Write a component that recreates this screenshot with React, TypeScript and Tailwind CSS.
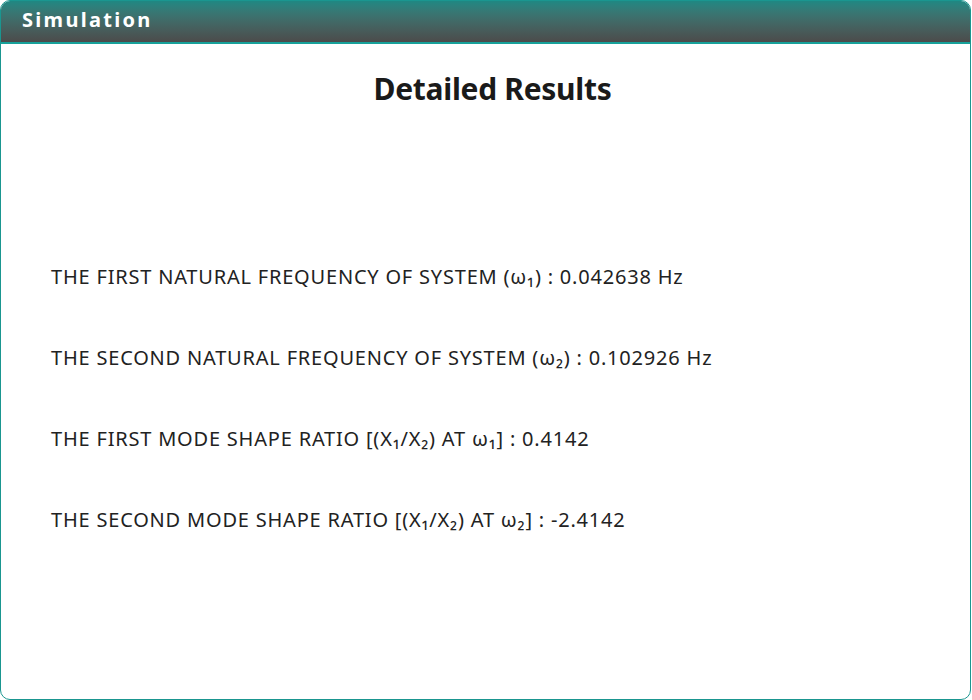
const results = [
  "THE FIRST NATURAL FREQUENCY OF SYSTEM (ω₁) : 0.042638 Hz",
  "THE SECOND NATURAL FREQUENCY OF SYSTEM (ω₂) : 0.102926 Hz",
  "THE FIRST MODE SHAPE RATIO [(X₁/X₂) AT ω₁] : 0.4142",
  "THE SECOND MODE SHAPE RATIO [(X₁/X₂) AT ω₂] : -2.4142",
];

export default function App() {
  return (
    <div className="w-[972px] h-[700px] bg-white font-['Noto_Sans',sans-serif]">
      <div className="w-[971px] h-[700px] border border-[#1a9690] rounded-[10px] overflow-hidden flex flex-col">
        <div className="h-[43px] shrink-0 bg-gradient-to-b from-[#1e8883] to-[#4b4b4b] border-b-2 border-[#17a19a] flex items-center px-[21px]">
          <span className="text-white font-bold text-[20px] tracking-[2.3px] -mt-[3px]">Simulation</span>
        </div>
        <div className="flex flex-col">
          <h1 className="text-center text-[30px] font-bold text-[#1a1a1a] mt-[22px] pl-[14px] tracking-[-0.3px]">
            Detailed Results
          </h1>
          <div className="flex flex-col gap-[53px] mt-[152px] pl-[50px]">
            {results.map((r) => (
              <p key={r} className="text-[20px] text-[#222] leading-[28px] tracking-[0.8px]">
                {r}
              </p>
            ))}
          </div>
        </div>
      </div>
    </div>
  );
}
